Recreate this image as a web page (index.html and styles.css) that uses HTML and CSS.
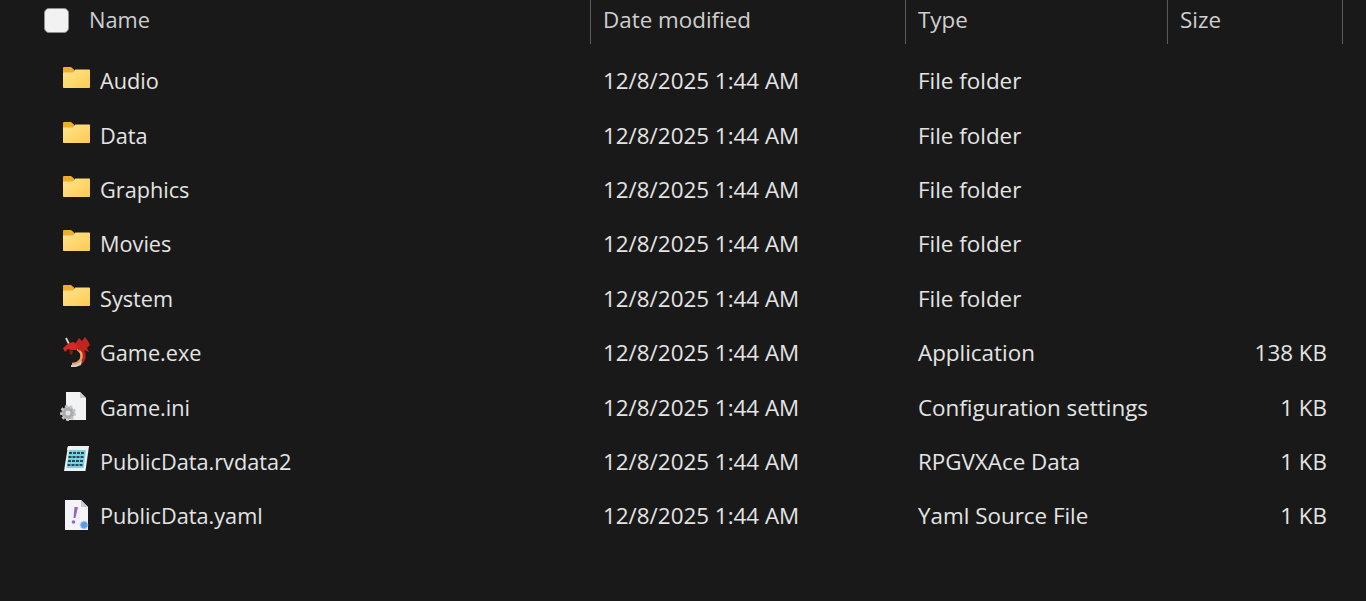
FILE: index.html
```html
<!DOCTYPE html>
<html lang="en">
<head>
<meta charset="utf-8">
<title>Game folder</title>
<link rel="stylesheet" href="styles.css">
</head>
<body>
<svg class="defs" width="0" height="0" aria-hidden="true">
  <defs>
    <linearGradient id="fold" x1="0" y1="0" x2="1" y2="1"><stop offset="0" stop-color="#ffe48c"/><stop offset="1" stop-color="#fdcb52"/></linearGradient>
    <symbol id="folder" viewBox="0 0 27 21">
      <path d="M0 1.200C0 .5.500 0 1.200 0H8l3.500 3L9 6H0z" fill="#eeae2b"/>
      <path d="M0 5.500h9L12.500 2.500H26c.6 0 1 .4 1 1V20c0 .6-.4 1-1 1H1c-.6 0-1-.4-1-1z" fill="url(#fold)"/>
    </symbol>
  </defs>
</svg>
<main class="explorer">
  <header class="row head">
    <div class="cell name-head"><span class="check"></span><span class="name-label">Name</span></div>
    <div class="cell">Date modified</div>
    <div class="cell">Type</div>
    <div class="cell">Size</div>
  </header>
  <div class="list">
    <div class="row item"><div class="cell name"><svg class="icon folder"><use href="#folder"/></svg><span>Audio</span></div><div class="cell">12/8/2025 1:44 AM</div><div class="cell">File folder</div><div class="cell size"></div></div>
    <div class="row item"><div class="cell name"><svg class="icon folder"><use href="#folder"/></svg><span>Data</span></div><div class="cell">12/8/2025 1:44 AM</div><div class="cell">File folder</div><div class="cell size"></div></div>
    <div class="row item"><div class="cell name"><svg class="icon folder"><use href="#folder"/></svg><span>Graphics</span></div><div class="cell">12/8/2025 1:44 AM</div><div class="cell">File folder</div><div class="cell size"></div></div>
    <div class="row item"><div class="cell name"><svg class="icon folder"><use href="#folder"/></svg><span>Movies</span></div><div class="cell">12/8/2025 1:44 AM</div><div class="cell">File folder</div><div class="cell size"></div></div>
    <div class="row item"><div class="cell name"><svg class="icon folder"><use href="#folder"/></svg><span>System</span></div><div class="cell">12/8/2025 1:44 AM</div><div class="cell">File folder</div><div class="cell size"></div></div>
    <div class="row item"><div class="cell name">
      <svg class="icon" viewBox="0 0 30 32">
        <path d="M6 2l3 6" stroke="#d8d8d8" stroke-width="1.800"/>
        <path d="M18 27C25 24 25 16 18 12" fill="none" stroke="#b5231f" stroke-width="5"/>
        <path d="M12 28c7 0 11-5 9-11-1-2-2-3-4-4" fill="none" stroke="#eea25c" stroke-width="2.500"/>
        <path d="M11 29c5 0 9-2 11-5l-1 5-5 2-5 0z" fill="#cfcfcf"/>
        <path d="M15 8l4-6 3 3 3-4 3 4 2 4-3 3 2 4-5-2-2 1-4-1z" fill="#c0251f"/>
        <path d="M3 12l6-5 5-1 4 4-2 4-5 0-3-1-3 3z" fill="#d42a22"/>
        <path d="M9 14l4 1-1 4-2-1z" fill="#8c1a16"/>
      </svg><span>Game.exe</span></div><div class="cell">12/8/2025 1:44 AM</div><div class="cell">Application</div><div class="cell size">138 KB</div></div>
    <div class="row item"><div class="cell name">
      <svg class="icon" viewBox="0 0 30 32">
        <path d="M6 2h14l6 6v22H6z" fill="#f2f3f5"/>
        <path d="M20 2l6 6h-6z" fill="#c9ccd1"/>
        <circle cx="8" cy="23" r="6.500" fill="#a9abad" stroke="#c3c5c7" stroke-width="3" stroke-dasharray="2.500 2"/>
        <circle cx="8" cy="23" r="2.500" fill="#e2e3e4"/>
      </svg><span>Game.ini</span></div><div class="cell">12/8/2025 1:44 AM</div><div class="cell">Configuration settings</div><div class="cell size">1 KB</div></div>
    <div class="row item"><div class="cell name">
      <svg class="icon" viewBox="0 0 30 32">
        <path d="M8 2h21l-3.500 25H4z" fill="#e9f2f5"/>
        <path d="M9 6h17l-2.500 18H6.500z" fill="#7ed0dc"/>
        <path d="M9 9h15M8.500 13h15M8 17h15M7.500 21h15" stroke="#1d4d5c" stroke-width="1.800" stroke-dasharray="3 1"/>
        <path d="M8 2h5l-1 4H7z" fill="#f4f6f7"/>
      </svg><span>PublicData.rvdata2</span></div><div class="cell">12/8/2025 1:44 AM</div><div class="cell">RPGVXAce Data</div><div class="cell size">1 KB</div></div>
    <div class="row item"><div class="cell name">
      <svg class="icon" viewBox="0 0 30 32">
        <path d="M5 1h16l7 7v23H5z" fill="#f4f4f8"/>
        <path d="M21 1l7 7h-7z" fill="#c9cad2"/>
        <path d="M14.500 8h3.500l-2.500 11h-2z" fill="#8e68c4"/>
        <circle cx="13.500" cy="23" r="1.800" fill="#8e68c4"/>
        <circle cx="24" cy="26" r="3.500" fill="#5b9be0" stroke="#8cbcec" stroke-width="1.500" stroke-dasharray="1.500 1"/>
      </svg><span>PublicData.yaml</span></div><div class="cell">12/8/2025 1:44 AM</div><div class="cell">Yaml Source File</div><div class="cell size">1 KB</div></div>
  </div>
</main>
</body>
</html>
```
FILE: styles.css
```css
* { box-sizing: border-box; }
html, body { margin: 0; height: 100%; overflow: hidden; }
body {
  background: #191919;
  color: #e4e4e4;
  font-family: "Open Sans", "Noto Sans", sans-serif;
  font-size: 22.4px;
}
.defs { display: block; height: 0; }
.explorer { padding-left: 44px; }
.row {
  display: grid;
  grid-template-columns: 547px 315px 262px 175px;
  align-items: center;
}
.head { height: 44px; color: #cfcfcf; }
.head .cell {
  height: 44px;
  padding: 0 0 5px 12px;
  border-right: 1px solid #5a5a5a;
  display: flex;
  align-items: center;
}
.head .name-head { padding-left: 0; gap: 20px; }
.name-label { font-size: 21.8px; }
.check {
  width: 25px;
  height: 25px;
  margin-top: 1px;
  background: #f2f2f2;
  border: 1px solid #8f8f8f;
  border-radius: 5px;
}
.list { padding-top: 9.5px; }
.item { height: 54.4px; }
.item .cell { padding-left: 12px; white-space: nowrap; }
.item .name {
  padding-left: 18px;
  display: flex;
  align-items: center;
  gap: 10px;
  font-size: 21.7px;
}
.icon { width: 30px; height: 32px; flex: none; margin-left: -2px; margin-top: -2px; }
.folder { width: 27px; height: 21px; margin-left: 1px; margin-right: 0; margin-top: -6px; }
.item .size { text-align: right; padding-right: 16px; padding-left: 0; }
```
